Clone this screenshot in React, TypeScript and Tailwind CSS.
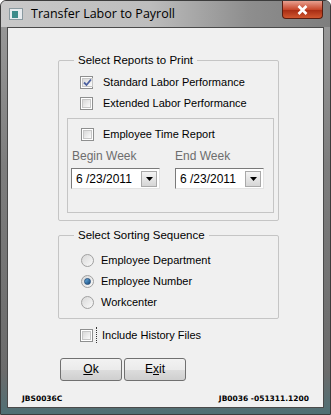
import React from 'react';

const font = { fontFamily: '"Liberation Sans", Arial, sans-serif' };

function CheckBox({ checked }: { checked?: boolean }) {
  return (
    <span className="w-[13px] h-[13px] border border-[#8e8f8f] bg-white p-[1px] shrink-0 flex">
      <span className="flex-1 border border-[#c6c6c6] bg-gradient-to-br from-[#d9d9d9] to-[#fbfbfb] flex items-center justify-center">
        {checked && (
          <svg width="9" height="9" viewBox="0 0 9 9">
            <path d="M1 4.5 L3.5 7 L8 1.5" stroke="#4d61a0" strokeWidth="1.8" fill="none" />
          </svg>
        )}
      </span>
    </span>
  );
}

function Radio({ checked }: { checked?: boolean }) {
  return (
    <span className="w-[13px] h-[13px] rounded-full border border-[#a0a0a0] bg-gradient-to-br from-[#d8d8d8] to-[#fafafa] shrink-0 flex items-center justify-center">
      {checked && (
        <span className="w-[7px] h-[7px] rounded-full bg-gradient-to-br from-[#6bb3e6] to-[#15487a] border border-[#27507c]" />
      )}
    </span>
  );
}

function DateCombo() {
  return (
    <div className="w-[89px] h-[21px] border border-t-[#7a7a7a] border-l-[#7a7a7a] border-b-[#e3e3e3] border-r-[#e3e3e3] bg-white flex items-center pl-[4px] pr-[2px]">
      <span className="text-[12px] text-black flex-1 leading-none">6 /23/2011</span>
      <span className="w-[16px] h-[16px] bg-gradient-to-b from-[#f4f4f4] to-[#d6d6d6] border border-[#a9a9a9] flex items-center justify-center">
        <svg width="7" height="4" viewBox="0 0 7 4"><path d="M0 0 H7 L3.5 4 Z" fill="#000" /></svg>
      </span>
    </div>
  );
}

function Button({ children }: { children: React.ReactNode }) {
  return (
    <button className="w-[62px] h-[23px] rounded-[3px] border border-[#707070] bg-[linear-gradient(to_bottom,#f2f2f2_0%,#ebebeb_50%,#dddddd_51%,#cfcfcf_100%)] text-[12px] text-black flex items-center justify-center">
      {children}
    </button>
  );
}

function Legend({ children }: { children: React.ReactNode }) {
  return (
    <span className="-mt-[8px] ml-[15px] px-[4px] self-start bg-[#f0f0f0] text-[11.5px] leading-[14px]">
      {children}
    </span>
  );
}

export default function App() {
  return (
    <div className="w-[331px] h-[415px] flex flex-col bg-[linear-gradient(to_bottom,#9c9c9c,#7d7d7d_40%,#6b6b6b_90%,#4f6f74)] border border-[#3c3c3c] rounded-t-[6px] overflow-hidden" style={font}>
      <div className="h-[26px] flex items-start shrink-0 bg-[linear-gradient(to_right,#c9c9c9_0%,#bdbdbd_45%,#8e8e8e_75%,#7e7e7e_100%)]">
        <span className="ml-[8px] mt-[7px] w-[14px] h-[12px] bg-[#e8ecef] border border-[#8a9aa0] flex items-center pl-[2px]">
          <span className="w-[6px] h-[7px] bg-[#3d8b8a]" />
        </span>
        <span className="ml-[8px] mt-[5px] text-[12.5px] text-black leading-[16px]" style={{ fontFamily: '"Open Sans", "Liberation Sans", sans-serif' }}>
          Transfer Labor to Payroll
        </span>
        <span className="ml-auto mr-[7px] w-[41px] h-[18px] rounded-b-[4px] border border-[#5a1d10] border-t-0 bg-[linear-gradient(to_bottom,#e8a090,#c8482c_50%,#a52a12_51%,#d0562f)] flex items-center justify-center">
          <svg width="11" height="10" viewBox="0 0 11 10">
            <path d="M1.5 1 L9.5 9 M9.5 1 L1.5 9" stroke="#fff" strokeWidth="2.6" />
          </svg>
        </span>
      </div>

      <div className="flex-1 mx-[6px] mb-[6px] border border-[#4a4a4a] bg-[#f0f0f0] flex flex-col text-[11px] leading-[13px] text-black">
        <div className="ml-[50px] mt-[32px] w-[221px] h-[161px] border border-[#c5c5c5] rounded-[2px] flex flex-col">
          <Legend>Select Reports to Print</Legend>
          <div className="flex items-center mt-[9px] ml-[21px]">
            <CheckBox checked />
            <span className="ml-[10px]">Standard Labor Performance</span>
          </div>
          <div className="flex items-center mt-[8px] ml-[21px]">
            <CheckBox />
            <span className="ml-[10px]">Extended Labor Performance</span>
          </div>
          <div className="ml-[8px] mt-[8px] w-[207px] h-[95px] border border-[#c5c5c5] flex flex-col">
            <div className="flex items-center mt-[9px] ml-[13px]">
              <CheckBox />
              <span className="ml-[9px]">Employee Time Report</span>
            </div>
            <div className="flex mt-[8px] ml-[3px] gap-[15px]">
              <div className="flex flex-col">
                <span className="text-[#6d6d6d] text-[12px] leading-[14px] ml-[1px] mb-[5px]">Begin Week</span>
                <DateCombo />
              </div>
              <div className="flex flex-col">
                <span className="text-[#6d6d6d] text-[12px] leading-[14px] mb-[5px]">End Week</span>
                <DateCombo />
              </div>
            </div>
          </div>
        </div>

        <div className="ml-[50px] mt-[14px] w-[221px] h-[84px] border border-[#c5c5c5] rounded-[2px] flex flex-col">
          <Legend>Select Sorting Sequence</Legend>
          <div className="flex items-center mt-[12px] ml-[22px]">
            <Radio />
            <span className="ml-[7px]">Employee Department</span>
          </div>
          <div className="flex items-center mt-[8px] ml-[22px]">
            <Radio checked />
            <span className="ml-[7px]">Employee Number</span>
          </div>
          <div className="flex items-center mt-[8px] ml-[22px]">
            <Radio />
            <span className="ml-[7px]">Workcenter</span>
          </div>
        </div>

        <div className="flex items-center ml-[72px] mt-[8px]">
          <CheckBox />
          <span className="ml-[3px] h-[16px] border-l border-dotted border-[#333]" />
          <span className="ml-[5px]">Include History Files</span>
        </div>

        <div className="flex ml-[52px] mt-[15px] gap-[2px]">
          <Button><span className="underline">O</span>k</Button>
          <Button>E<span className="underline">x</span>it</Button>
        </div>

        <div className="mt-auto mb-[5px] mx-[14px] flex justify-between text-[7.5px] font-bold leading-none" style={{ fontFamily: '"DejaVu Sans", sans-serif' }}>
          <span>JBS0036C</span>
          <span>JB0036 -051311.1200</span>
        </div>
      </div>
    </div>
  );
}
